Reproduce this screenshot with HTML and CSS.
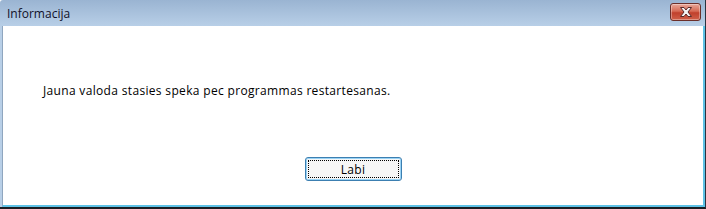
FILE: index.html
```html
<!DOCTYPE html>
<html>
<head>
<meta charset="utf-8">
<link rel="stylesheet" href="styles.css">
</head>
<body>
<div class="window">
  <div class="titlebar">
    <span class="title">Informacija</span>
    <button class="close" aria-label="Close">
      <svg width="14" height="10" viewBox="0 0 14 10">
        <path d="M1.5 0.5 H5 L7 3 L9 0.5 H12.5 L9 5 L12.5 9.5 H9 L7 7 L5 9.5 H1.5 L5 5 Z" fill="#f4f4f4" stroke="#5a2a2a" stroke-width="1" stroke-linejoin="round"/>
      </svg>
    </button>
  </div>
  <div class="client">
    <p class="message">Jauna valoda stasies speka pec programmas restartesanas.</p>
    <div class="actions">
      <button class="btn"><span class="focus">Labi</span></button>
    </div>
  </div>
</div>
</body>
</html>
```
FILE: styles.css
```css
html, body {
  margin: 0;
  padding: 0;
  background: #ffffff;
}
.window {
  width: 706px;
  height: 209px;
  box-sizing: border-box;
  display: flex;
  flex-direction: column;
  background: linear-gradient(#9ab4d2, #b8cfe7 26px, #b8cfe7);
  border-right: 1px solid #2a3340;
  border-bottom: 2px solid #1a1d22;
  border-top-left-radius: 3px;
  font-family: "Open Sans", "Noto Sans", sans-serif;
  font-size: 12px;
}
.titlebar {
  height: 26px;
  flex: none;
  display: flex;
  align-items: center;
  justify-content: space-between;
  padding: 0 4px 0 7px;
  box-sizing: border-box;
}
.title {
  color: #10102a;
  font-size: 12px;
  margin-top: 1px;
}
.close {
  width: 31px;
  height: 18px;
  margin-top: -2px;
  padding: 0;
  border: 1px solid #6b2f2a;
  border-radius: 3px;
  background: linear-gradient(#e8a89a, #d66a55 45%, #c0402c 55%, #d0604a);
  display: flex;
  align-items: center;
  justify-content: center;
  box-shadow: inset 0 0 0 1px rgba(255,255,255,0.35);
}
.client {
  flex: 1;
  background: #ffffff;
  margin-left: 2px;
  border-left: 1px solid #8fa6bf;
  border-bottom: 2px solid #5ec2e6;
  border-right: 2px solid #5ec2e6;
  display: flex;
  flex-direction: column;
}
.message {
  margin: 57px 0 0 40px;
  color: #000000;
  font-size: 12px;
  letter-spacing: 0.33px;
  line-height: 16px;
}
.actions {
  display: flex;
  justify-content: center;
  margin-top: 58px;
}
.btn {
  width: 97px;
  height: 24px;
  border: 1px solid #3c7fb1;
  border-radius: 3px;
  background: #f6f6f6;
  padding: 2px;
  box-shadow: inset 0 0 0 1px #9ad3f5;
  font-family: inherit;
  font-size: 12px;
  letter-spacing: 0.3px;
  color: #000;
}
.focus {
  display: flex;
  align-items: center;
  justify-content: center;
  height: 100%;
  border: 1px dotted #000;
  box-sizing: border-box;
}
```
